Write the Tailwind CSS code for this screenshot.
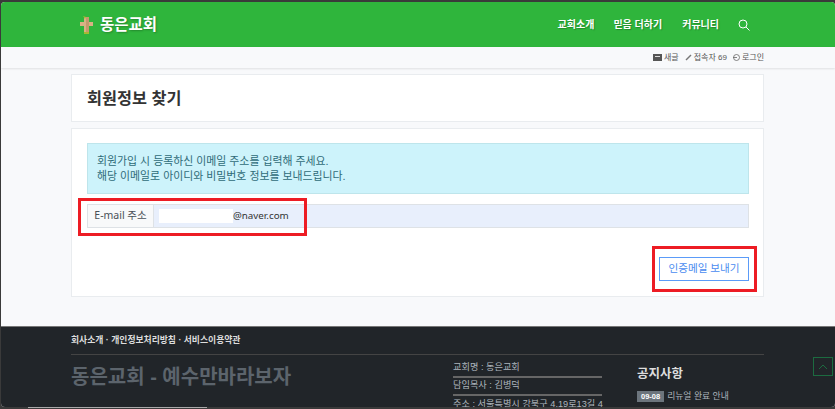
<!DOCTYPE html>
<html lang="ko">
<head>
    <meta charset="UTF-8">
    <meta name="viewport" content="width=device-width, initial-scale=1.0">
    <title>회원정보 찾기</title>
    <script src="https://cdn.jsdelivr.net/npm/@tailwindcss/browser@4"></script>
</head>
<body class="h-[409px] w-[835px] overflow-hidden bg-[#3a3a3a] font-['Liberation_Sans','Noto_Sans_CJK_KR',sans-serif]">

    <div class="relative mt-[2px] ml-px h-[405px] overflow-hidden rounded-t-[4px] rounded-b-[4px] bg-[#f8f9fb]">

        <!-- header -->
        <header class="flex h-[45px] items-center justify-between bg-[#2fb53c] pl-[79px] pr-[85px]">
            <div class="flex items-center gap-[7px]">
                <svg class="h-[18px] w-[13px]" viewBox="0 0 13 18">
                    <path d="M4 1h5v5h4v4H9v7H4v-7H0V6h4z" fill="#d9b184"/>
                    <path d="M6 1h3v16H6z" fill="#c49a6c"/>
                    <path d="M3 0l3 1-1 2zM4 16h5v2H4z" fill="#a8b832"/>
                </svg>
                <span class="text-[15.5px] leading-none font-bold text-white [text-shadow:1px_1px_2px_rgba(0,0,0,.25)]">동은교회</span>
            </div>
            <nav class="flex items-center text-[10px] font-bold text-white [text-shadow:1px_1px_1px_rgba(0,0,0,.25)]">
                <a class="mr-[19px]">교회소개</a>
                <a class="mr-[20px]">믿음 더하기</a>
                <a class="mr-[19px]">커뮤니티</a>
                <svg class="h-[12px] w-[12px]" viewBox="0 0 12 12" fill="none" stroke="#fff" stroke-width="1">
                    <circle cx="5" cy="5" r="4"/>
                    <path d="M8 8l3.5 3.5"/>
                </svg>
            </nav>
        </header>

        <!-- sub bar -->
        <div class="flex h-[21px] items-center justify-end gap-[6px] pr-[71px] text-[8px] text-[#555] shadow-[0_1px_2px_rgba(0,0,0,.1)]">
            <span class="flex items-center gap-[2px]">
                <svg class="h-[7px] w-[9px]" viewBox="0 0 9 7"><path d="M0 0h9v7H0z" fill="#555"/><path d="M2 2h5v1H2z" fill="#ddd"/></svg>
                새글
            </span>
            <span class="flex items-center gap-[2px]">
                <svg class="h-[7px] w-[7px]" viewBox="0 0 7 7" fill="none" stroke="#777" stroke-width="1.5"><path d="M1 6l5-5"/></svg>
                접속자 69
            </span>
            <span class="flex items-center gap-[2px]">
                <svg class="h-[7px] w-[7px]" viewBox="0 0 7 7" fill="none" stroke="#666" stroke-width=".8"><circle cx="3.5" cy="3.5" r="3"/><path d="M0 3.5h4"/></svg>
                로그인
            </span>
        </div>

        <!-- content -->
        <main class="mx-[70px] mt-[6px] w-[693px]">
            <div class="flex h-[48px] items-center border border-[#e9ecef] bg-white pl-[15px]">
                <h1 class="text-[16.3px] font-bold text-[#333]">회원정보 찾기</h1>
            </div>

            <div class="mt-[6px] h-[169px] border border-[#e9ecef] bg-white pl-[15px] pr-[14px] pt-[14px]">
                <div class="h-[51px] border border-[#bee5eb] bg-[#cdf3fb] px-[9px] py-[10px] text-[10.9px] leading-[15px] text-[#2f6b78]">
                    <p>회원가입 시 등록하신 이메일 주소를 입력해 주세요.</p>
                    <p>해당 이메일로 아이디와 비밀번호 정보를 보내드립니다.</p>
                </div>

                <div class="mt-[10px] flex h-[24px] border border-[#dee2e6] bg-[#e8effc] font-['Noto_Sans','Noto_Sans_CJK_KR',sans-serif] text-[10.5px]">
                    <span class="flex w-[66px] items-center justify-center border-r border-[#dee2e6] bg-[#f8f9fa] text-[#495057]">E-mail 주소</span>
                    <span class="ml-[5px] flex items-center text-[9.8px] text-[#333]">
                        <span class="h-[14px] w-[74px] bg-white"></span>@naver.com
                    </span>
                </div>

                <div class="mt-[29px] flex justify-end">
                    <button class="h-[24px] w-[90px] border border-[#5b9bf8] bg-white text-[10.6px] text-[#4a8cf0]">인증메일 보내기</button>
                </div>
            </div>
        </main>

        <!-- footer -->
        <footer class="absolute inset-x-0 top-[324px] h-[81px] border-t border-[#777] bg-[#212529]">
            <div class="mx-[70px] w-[693px]">
                <div class="flex h-[28px] items-center border-b border-[#444] text-[8.8px] font-bold text-[#ddd]">회사소개 · 개인정보처리방침 · 서비스이용약관</div>
                <div class="flex">
                    <div class="w-[382px] pt-[9px] text-[20px] font-bold leading-[26px] text-[#5c646c]">동은교회 - 예수만바라보자</div>
                    <div class="w-[149px] text-[9.2px] text-[#adb5bd]">
                        <div class="flex h-[23px] items-end border-b-2 border-[#666] pb-px">교회명 : 동은교회</div>
                        <div class="flex h-[18px] items-end border-b-2 border-[#666] pb-px">담임목사 : 김병덕</div>
                        <div class="mt-[2px] whitespace-nowrap">주소 : 서울특별시 강북구 4.19로13길 4</div>
                    </div>
                    <div class="ml-[35px]">
                        <h2 class="mt-[10px] text-[12.5px] font-bold text-[#ddd]">공지사항</h2>
                        <div class="mt-[6px] flex items-center gap-[3px] text-[8.8px] text-[#adb5bd]">
                            <span class="bg-[#6c757d] px-[4px] text-[7.5px] font-bold text-white">09-08</span>
                            리뉴얼 완료 안내
                        </div>
                    </div>
                </div>
            </div>
        </footer>

        <!-- scroll to top -->
        <div class="absolute top-[355px] left-[812px] flex h-[19px] w-[20px] items-center justify-center border border-[#1c6b40]">
            <svg class="h-[6px] w-[10px]" viewBox="0 0 10 6" fill="none" stroke="#1c6b40"><path d="M1 5l4-4 4 4"/></svg>
        </div>

        <!-- red annotation boxes -->
        <div class="absolute top-[196px] left-[77px] h-[38px] w-[229px] border-[3px] border-[#ed1c24]"></div>
        <div class="absolute top-[244px] left-[651px] h-[46px] w-[105px] border-[3px] border-[#ed1c24]"></div>
    </div>

    <!-- window edge below the page -->
    <div class="ml-[28px] h-px w-[179px] bg-[#aaa]"></div>

</body>
</html>
